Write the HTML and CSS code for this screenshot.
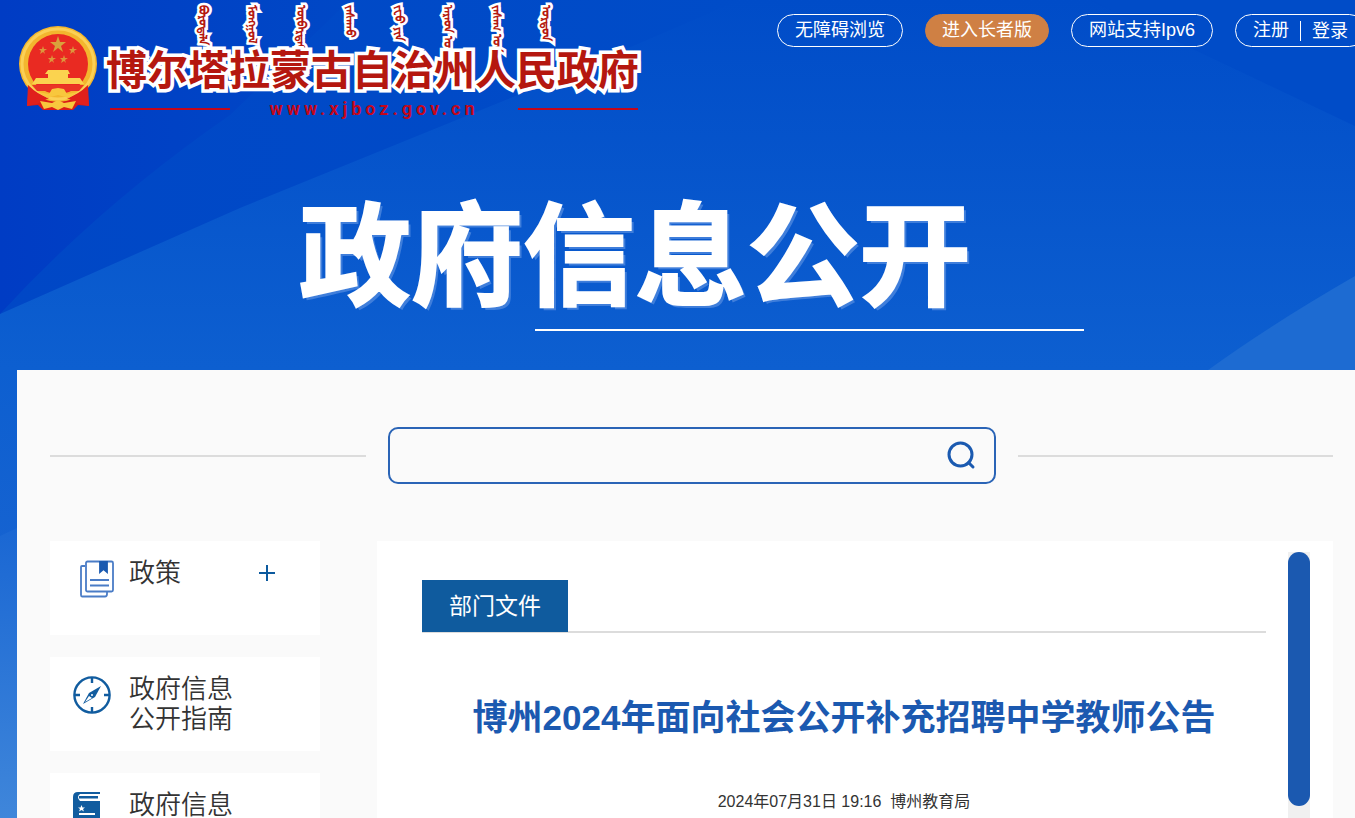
FILE: index.html
```html
<!DOCTYPE html>
<html lang="zh-CN">
<head>
    <meta charset="UTF-8">
    <meta name="viewport" content="width=device-width, initial-scale=1.0">
    <title>博州2024年面向社会公开补充招聘中学教师公告</title>
    <link rel="stylesheet" href="styles.css">
</head>
<body>
    <svg class="page-bg" viewBox="0 0 1355 818" preserveAspectRatio="none" aria-hidden="true">
        <defs>
            <linearGradient id="sky" x1="0" y1="0" x2="0" y2="1">
                <stop offset="0" stop-color="#004cc8"/>
                <stop offset="0.45" stop-color="#0d5fd0"/>
                <stop offset="1" stop-color="#2268d2"/>
            </linearGradient>
            <linearGradient id="dark" x1="0" y1="0" x2="1" y2="0">
                <stop offset="0" stop-color="#003cc4"/>
                <stop offset="1" stop-color="#0048c6"/>
            </linearGradient>
            <linearGradient id="mid" x1="0" y1="0" x2="1" y2="0">
                <stop offset="0" stop-color="#0047c6"/>
                <stop offset="1" stop-color="#004cc8"/>
            </linearGradient>
            <linearGradient id="low" x1="0" y1="0" x2="0" y2="1">
                <stop offset="0" stop-color="#1a67d3"/>
                <stop offset="1" stop-color="#3f86da"/>
            </linearGradient>
        </defs>
        <rect width="1355" height="818" fill="url(#sky)"/>
        <path d="M0 0H740L540 86L240 208L0 314Z" fill="url(#mid)"/>
        <path d="M0 0H350L230 115Q100 205 0 314Z" fill="url(#dark)"/>
        <path d="M1090 0H1355V126Z" fill="#004cc8"/>
        <path d="M1355 276Q1270 325 1208 370H1355Z" fill="#1d6bd2"/>
        <path d="M0 536L17 528V818H0Z" fill="url(#low)"/>
    </svg>

    <header class="header">
        <div class="top">
            <a class="logo" href="#">
                <svg class="emblem" viewBox="0 0 80 86" aria-hidden="true">
                    <path d="M11 58L9 81L20 80L25 85H55L60 80L71 81L69 58Z" fill="#d91a18"/>
                    <ellipse cx="40" cy="39" rx="39" ry="38" fill="#f3b62e"/>
                    <ellipse cx="40" cy="39" rx="36" ry="35" fill="none" stroke="#fbd056" stroke-width="3"/>
                    <circle cx="40" cy="39" r="30" fill="#e92a22"/>
                    <path d="M40 11L42 17H48L43 21L45 27L40 23L35 27L37 21L32 17H38Z" fill="#d9a23c"/>
                    <path id="star" d="M25 21L26 24H29L26 26L27 29L25 27L22 29L23 26L21 24H24Z" fill="#dd963c"/>
                    <use href="#star" x="30"/>
                    <use href="#star" x="9" y="9"/>
                    <use href="#star" x="21" y="9"/>
                    <path d="M30 45H50L52 49H50V53H62L66 59H14L18 53H30V49H27Z" fill="#fbd34f"/>
                    <path d="M14 60H66L61 66H19Z" fill="#ea3526"/>
                    <path d="M10 60Q20 70 31 73L19 79L9 81ZM70 60Q60 70 49 73L61 79L71 81Z" fill="#e0201c"/>
                    <path d="M40 63L46 64L49 69L60 67L51 73L40 70L29 73L20 67L31 69L34 64Z" fill="#f8c73d"/>
                    <path d="M22 76L34 78L40 75L46 78L58 76L54 84L46 82L40 85L34 82L26 84Z" fill="#f8c73d"/>
                </svg>
                <span class="logo-text">
                    <span class="mongol" lang="mn-Mong">
                        <span>ᠪᠣᠷᠣᠲᠠᠯᠠ</span><span>ᠮᠣᠩᠭᠣᠯ</span><span>ᠥᠪᠡᠷᠲᠡᠭᠡᠨ</span><span>ᠵᠠᠰᠠᠬᠤ</span><span>ᠵᠧᠦ ᠶᠢᠨ</span><span>ᠠᠷᠠᠳ ᠤᠨ</span><span>ᠵᠠᠰᠠᠭ ᠤᠨ</span><span>ᠣᠷᠳᠣᠨ</span>
                    </span>
                    <span class="site-name">博尔塔拉蒙古自治州人民政府</span>
                    <span class="domain"><i></i><span>www.xjboz.gov.cn</span><i></i></span>
                </span>
            </a>
            <nav class="tools">
                <a class="pill" href="#">无障碍浏览</a>
                <a class="pill pill-elder" href="#">进入长者版</a>
                <a class="pill" href="#">网站支持Ipv6</a>
                <span class="pill login"><a href="#">注册</a><a href="#">登录</a></span>
            </nav>
        </div>
        <div class="banner">
            <h2>政府信息公开</h2>
            <div class="banner-line"></div>
        </div>
    </header>

    <main class="main">
        <div class="search-row">
            <form class="search">
                <input type="text" aria-label="搜索">
                <button type="button" aria-label="搜索">
                    <svg width="30" height="30" viewBox="0 0 30 30" fill="none" stroke="#1b5ab0" stroke-width="3" stroke-linecap="round">
                        <circle cx="13.500" cy="14.500" r="11.500"/>
                        <path d="M21.500 22.500L26 27"/>
                    </svg>
                </button>
            </form>
        </div>
        <div class="content">
            <aside class="side">
                <a class="side-item" href="#">
                    <svg class="icon icon-policy" viewBox="0 0 36 38" fill="none" stroke="#4a7cc6" stroke-width="1.800">
                        <path d="M6 6H3Q2 6 2 7V35Q2 36.500 3 36.500H26Q28 36.500 28 34V32"/>
                        <rect x="7" y="1.500" width="27" height="30" rx="1.500"/>
                        <path d="M11 20H30M11 25.500H30"/>
                        <path d="M21 2H28V12L24.500 9L21 12Z" fill="#1b5ab0" stroke="#1b5ab0"/>
                    </svg>
                    <span class="side-text">政策</span>
                    <svg class="plus" viewBox="0 0 16 16"><path d="M8 0V16M0 8H16" stroke="#0c5a9e" stroke-width="2"/></svg>
                </a>
                <a class="side-item" href="#">
                    <svg class="icon" viewBox="0 0 38 38" fill="none" stroke="#115c9f" stroke-width="2.400">
                        <circle cx="19" cy="19" r="17.600"/>
                        <path d="M19 2V7M19 31V36M2 19H7M31 19H36"/>
                        <path d="M28 10L16 17L10 28L22 21Z" fill="#115c9f" stroke="none"/>
                        <path d="M16 20L19 22L12 26Z" fill="#fff" stroke="none"/>
                        <circle cx="19" cy="19" r="1" fill="#fff" stroke="none"/>
                    </svg>
                    <span class="side-text">政府信息<br>公开指南</span>
                </a>
                <a class="side-item" href="#">
                    <svg class="icon" viewBox="0 0 38 38">
                        <path d="M5 0H27V2H7Q3 5 7 9H27V38H0V5Q0 0 5 0Z" fill="#115c9f"/>
                        <path d="M6 4H25V6.500H6Z" fill="#115c9f"/>
                        <path d="M8.500 13L9.500 15.500H12L10 17L11 19.500L8.500 18L6 19.500L7 17L5 15.500H7.500Z" fill="#fff"/>
                        <path d="M6 21H22V23H6Z" fill="#fff"/>
                    </svg>
                    <span class="side-text">政府信息<br>公开制度</span>
                </a>
            </aside>
            <section class="panel">
                <article class="article">
                    <div class="tab-bar"><span class="tab">部门文件</span></div>
                    <h1>博州2024年面向社会公开补充招聘中学教师公告</h1>
                    <p class="meta">2024年07月31日 19:16&nbsp; 博州教育局</p>
                </article>
                <div class="scroll-track"><div class="scroll-thumb"></div></div>
            </section>
        </div>
    </main>
</body>
</html>
```
FILE: styles.css
```css
* {
    box-sizing: border-box;
    margin: 0;
    padding: 0;
}
body {
    font-family: "Liberation Sans", "Noto Sans CJK SC", sans-serif;
    color: #333;
    height: 100vh;
    overflow: hidden;
    position: relative;
}
a {
    color: inherit;
    text-decoration: none;
}
.page-bg {
    position: absolute;
    top: 0;
    left: 0;
    width: 100%;
    height: 100%;
    z-index: -1;
}
/* header */
.header {
    height: 370px;
    color: #fff;
}
.top {
    display: flex;
    justify-content: space-between;
    height: 180px;
}
.logo {
    display: flex;
    flex-shrink: 0;
    padding-left: 18px;
}
.emblem {
    width: 80px;
    height: 86px;
    margin-top: 25px;
}
.logo-text {
    display: flex;
    flex-direction: column;
    width: 536px;
    margin-left: 8px;
}
.mongol {
    display: flex;
    gap: 32px;
    height: 44px;
    padding: 5px 0 0 88px;
    font-size: 12px;
    line-height: 17px;
    font-weight: bold;
    color: #b5170f;
}
.mongol span {
    writing-mode: vertical-lr;
    white-space: nowrap;
    -webkit-text-stroke: 5px #fff;
    paint-order: stroke fill;
}
.site-name {
    font-size: 41px;
    line-height: 54px;
    font-weight: bold;
    white-space: nowrap;
    color: #b5170f;
    -webkit-text-stroke: 7px #fff;
    paint-order: stroke fill;
}
.domain {
    display: flex;
    align-items: center;
    justify-content: space-between;
    padding: 0 4px;
    font-family: "Roboto", sans-serif;
    font-size: 18px;
    line-height: 22px;
    font-weight: bold;
    letter-spacing: 4px;
    color: #c4071b;
}
.domain i {
    width: 120px;
    height: 2px;
    background: #c4071b;
}
.tools {
    display: flex;
    gap: 22px;
    padding-top: 14px;
    margin-right: -11px;
}
.pill {
    height: 33px;
    padding: 0 17px;
    border: 1px solid #fff;
    border-radius: 17px;
    font-size: 18px;
    line-height: 31px;
    white-space: nowrap;
}
.pill-elder {
    padding: 0 16px;
    background: #cf8044;
    border-color: #cf8044;
}
.login {
    display: flex;
    align-items: center;
}
.login a + a {
    line-height: 20px;
    margin-left: 11px;
    padding-left: 11px;
    border-left: 1px solid #fff;
}
.banner {
    padding: 9px 271px 0 299px;
}
.banner h2 {
    font-size: 112px;
    line-height: 140px;
    font-weight: bold;
    white-space: nowrap;
    -webkit-text-stroke: 2px #fff;
    text-shadow: 3px 3px 0 #3f7edb;
}
.banner-line {
    height: 2px;
    margin-left: 236px;
    background: #fff;
}
/* main */
.main {
    height: calc(100vh - 370px);
    margin-left: 17px;
    padding: 57px 22px 0 33px;
    background: #fafafa;
    overflow: hidden;
}
.search-row {
    display: flex;
    align-items: center;
    gap: 22px;
}
.search-row::before,
.search-row::after {
    content: "";
    flex: 1;
    height: 2px;
    background: #dcdcdc;
}
.search {
    display: flex;
    width: 608px;
    height: 57px;
    border: 2px solid #2a64b6;
    border-radius: 10px;
}
.search input {
    flex: 1;
    border: none;
    background: none;
    padding: 0 16px;
    font-size: 18px;
    outline: none;
}
.search button {
    width: 64px;
    padding-top: 2px;
    border: none;
    background: none;
    cursor: pointer;
}
.content {
    display: flex;
    gap: 57px;
    margin-top: 57px;
}
.side {
    width: 270px;
    flex-shrink: 0;
}
.side-item {
    display: flex;
    height: 94px;
    margin-bottom: 22px;
    padding: 17px 45px 0 23px;
    background: #fff;
}
.icon {
    width: 38px;
    height: 38px;
    margin: 2px 18px 0 0;
}
.icon-policy {
    margin: 2px 13px 0 5px;
}
.side-text {
    font-size: 26px;
    line-height: 30px;
    font-weight: 350;
    color: #333;
}
.plus {
    width: 16px;
    height: 16px;
    margin: 7px 0 0 auto;
}
.panel {
    display: flex;
    flex: 1;
    justify-content: space-between;
    height: 400px;
    padding: 11px 23px 0 45px;
    background: #fff;
}
.article {
    flex: 1;
    margin-right: 22px;
    padding-top: 28px;
}
.tab-bar {
    display: flex;
    height: 53px;
    border-bottom: 2px solid #dcdcdc;
}
.tab {
    height: 52px;
    padding: 0 27px;
    background: #0f5b9e;
    color: #fff;
    font-size: 23px;
    line-height: 52px;
}
.article h1 {
    margin-top: 58px;
    font-size: 35px;
    line-height: 54px;
    text-align: center;
    color: #1b59b0;
}
.meta {
    margin-top: 45px;
    font-size: 16px;
    line-height: 24px;
    text-align: center;
}
.scroll-track {
    width: 22px;
    background: #f0f0f0;
}
.scroll-thumb {
    height: 254px;
    border-radius: 11px;
    background: #1b59b0;
}
```
